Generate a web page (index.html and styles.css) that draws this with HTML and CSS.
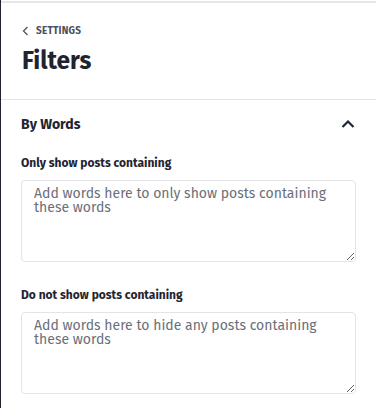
FILE: index.html
```html
<!DOCTYPE html>
<html>
<head>
<meta charset="utf-8">
<link rel="stylesheet" href="styles.css">
</head>
<body>
<div class="page">
  <div class="topline"></div>
  <header class="header">
    <a class="back" href="#">
      <svg width="7" height="10" viewBox="0 0 7 10"><path d="M5.5 1 L1.5 5 L5.5 9" fill="none" stroke="#4b5563" stroke-width="1.3"/></svg>
      <span>SETTINGS</span>
    </a>
    <h1 class="title">Filters</h1>
  </header>
  <section class="section">
    <div class="section-head">
      <h2 class="section-title">By Words</h2>
      <svg class="chev" width="14" height="10" viewBox="0 0 14 10"><path d="M1.5 8 L7 2.5 L12.5 8" fill="none" stroke="#1f2640" stroke-width="2.2"/></svg>
    </div>
    <label class="field">
      <span class="label">Only show posts containing</span>
      <textarea class="input" placeholder="Add words here to only show posts containing these words"></textarea>
    </label>
    <label class="field">
      <span class="label">Do not show posts containing</span>
      <textarea class="input" placeholder="Add words here to hide any posts containing these words"></textarea>
    </label>
  </section>
</div>
</body>
</html>
```
FILE: styles.css
```css
html, body {
  margin: 0;
  padding: 0;
  background: #fff;
}
body {
  font-family: "Fira Sans", Lato, "Noto Sans", sans-serif;
  color: #1f2430;
}
.page {
  border-left: 1px solid #1f2430;
  height: 408px;
  box-sizing: border-box;
  overflow: hidden;
}
.topline {
  margin-top: 1px;
  border-top: 2px solid #e6e6e6;
}
.header {
  padding: 21px 21px 0;
  border-bottom: 1px solid #e5e5e5;
  height: 75px;
}
.back {
  display: flex;
  align-items: center;
  gap: 7px;
  text-decoration: none;
  color: #4b5060;
  font-size: 10px;
  font-weight: 700;
  letter-spacing: 0.2px;
  height: 14px;
}
.title {
  margin: 8px 0 0;
  font-size: 24.5px;
  font-weight: 700;
  line-height: 30px;
  color: #1f2430;
}
.section {
  padding: 15px 20px 0 20px;
}
.section-head {
  display: flex;
  justify-content: space-between;
  align-items: center;
  height: 18px;
}
.section-title {
  margin: 0;
  font-size: 14px;
  font-weight: 700;
}
.chev {
  margin-right: 1px;
}
.field {
  display: flex;
  flex-direction: column;
  margin-top: 22px;
}
.field + .field {
  margin-top: 25px;
}
.label {
  font-size: 12px;
  font-weight: 700;
  line-height: 16px;
}
.input {
  margin-top: 9px;
  height: 82px;
  box-sizing: border-box;
  border: 1px solid #e2e4e8;
  border-radius: 4px;
  padding: 6px 12px;
  font-family: inherit;
  font-size: 14px;
  line-height: 14px;
  resize: vertical;
  outline: none;
}
.input::placeholder {
  color: #6b6f7a;
}
```
